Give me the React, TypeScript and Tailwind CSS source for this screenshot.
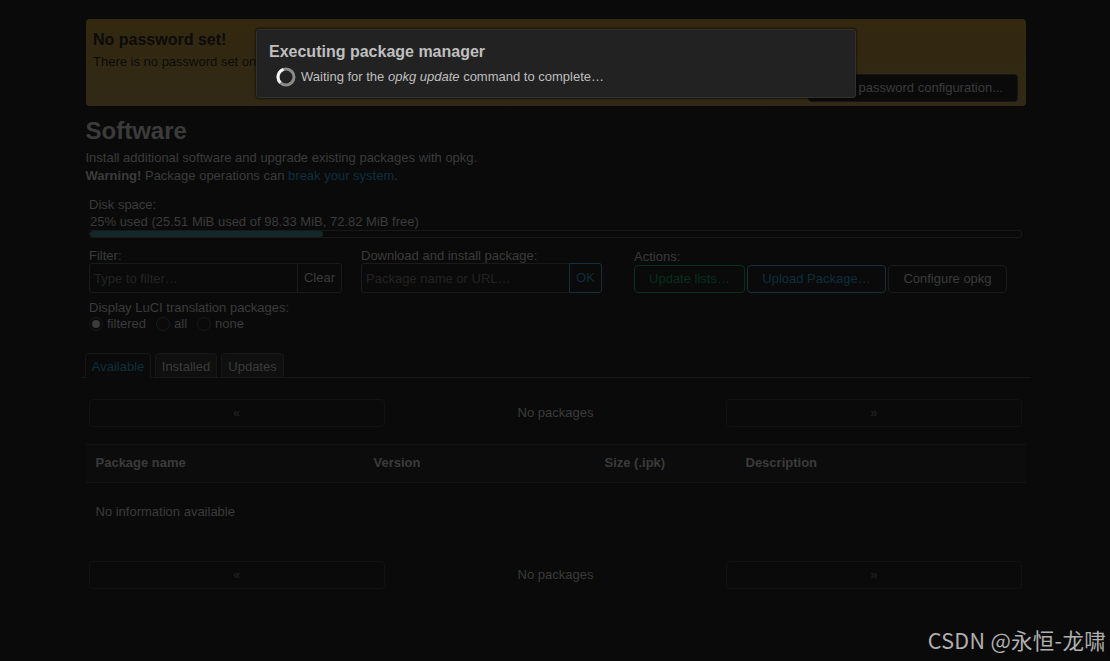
import clsx from "clsx";

interface PagerProps {
  className?: string;
}

const tabs = [
  { id: "available", label: "Available", width: "w-[66px]", active: true },
  { id: "installed", label: "Installed", width: "w-[62px]", active: false },
  { id: "updates", label: "Updates", width: "w-[63px]", active: false },
];

const languageFilters = [
  { id: "filtered", label: "filtered", checked: true },
  { id: "all", label: "all", checked: false },
  { id: "none", label: "none", checked: false },
];

function Pager({ className }: PagerProps) {
  return (
    <div className={clsx("mr-1 ml-[3px] flex h-7 items-center justify-between", className)}>
      <button className="h-7 w-[296px] rounded border border-[#121212] pr-px font-bold text-[#1e1e1e]">«</button>
      <div className="text-center">No packages</div>
      <button className="h-7 w-[296px] rounded border border-[#121212] font-bold text-[#1e1e1e]">»</button>
    </div>
  );
}

function Spinner() {
  return (
    <svg className="size-5 shrink-0" viewBox="0 0 20 20" fill="none">
      <circle cx="10" cy="10" r="8" stroke="#8b8b8b" strokeWidth="3" />
      <path d="M7.6 2.4A8 8 0 0 0 4.4 15.7" stroke="#f4f4f4" strokeWidth="3" />
    </svg>
  );
}

function ProgressModal() {
  return (
    <div className="absolute top-[29px] left-64 h-[69px] w-[600px] rounded-[3px] border border-[#303030] bg-[#222] px-3 pt-[11px] text-[#bfbfbf] shadow-[0_0_3px_#000]">
      <h4 className="text-base leading-[22px] font-bold">Executing package manager</h4>
      <p className="ml-[7px] flex items-center gap-[5px] pt-1 leading-[18px]">
        <Spinner />
        <span>
          Waiting for the <em>opkg update</em> command to complete…
        </span>
      </p>
    </div>
  );
}

export default function App() {
  return (
    <div className="relative h-[661px] w-[1110px] overflow-hidden bg-[#0a0a0a] pt-[19px] pl-[86px] font-['Liberation_Sans',Arial,sans-serif] text-[13px] leading-[18px] text-[#3b3b3b]">
      <div className="w-[940px]">
        {/* Password warning */}
        <div className="flex h-[87px] flex-col rounded bg-linear-to-b from-[#33280f] to-[#312916] px-2 pt-[9px] pb-1 pl-[7px] text-[#0b0b0b]">
          <h4 className="text-base leading-6 font-bold">No password set!</h4>
          <p className="leading-[19px]">There is no password set on this router.</p>
          <button className="mt-auto h-7 w-[210px] self-end rounded border border-[#151515] bg-[#0a0a0a] text-[#3b3b3b] whitespace-nowrap">
            Go to password configuration...
          </button>
        </div>

        <h2 className="mt-[7px] -ml-[0.5px] text-2xl leading-9 font-bold">Software</h2>
        <div className="-ml-[0.5px]">
          <p>Install additional software and upgrade existing packages with opkg.</p>
          <p>
            <strong>Warning!</strong> Package operations can{" "}
            <a className="text-[#0d2e3d]">break your system</a>.
          </p>
        </div>

        {/* Disk space */}
        <div className="mt-[11px] mr-1 ml-[3px]">
          <div className="h-[17px]">Disk space:</div>
          <div className="h-[17px] pl-px leading-[17px]">25% used (25.51 MiB used of 98.33 MiB, 72.82 MiB free)</div>
          <div className="h-2 overflow-hidden rounded-[3px] border border-[#181818]">
            <div className="h-full w-1/4 rounded-[3px] bg-[#14282c]" />
          </div>
        </div>

        {/* Controls */}
        <div className="mx-[3px] mt-2 flex h-12">
          <div className="w-[272px]">
            <div className="h-[17px] pt-px">Filter:</div>
            <div className="flex h-[30px] w-[253px] rounded-[3px] border border-[#1a1a1a]">
              <input
                className="min-w-0 flex-1 px-1 pt-0.5 placeholder:text-[#232323]"
                placeholder="Type to filter…"
              />
              <button className="w-11 border-l border-[#1a1a1a] pb-px">Clear</button>
            </div>
          </div>
          <div className="w-[273px]">
            <div className="h-[17px] pt-px">Download and install package:</div>
            <div className="flex h-[30px] w-[241px]">
              <input
                className="min-w-0 flex-1 rounded-l-[3px] border border-r-0 border-[#1a1a1a] px-1 pt-0.5 placeholder:text-[#232323]"
                placeholder="Package name or URL…"
              />
              <button className="w-[33px] rounded-r-[3px] border border-[#162f38] pb-px text-[#0d2e3d]">OK</button>
            </div>
          </div>
          <div>
            <div className="h-[19px] pt-0.5">Actions:</div>
            <div className="flex gap-0.5">
              <button className="h-7 w-[111px] rounded border border-[#04301e] text-[#04301e]">Update lists…</button>
              <button className="h-7 w-[139px] rounded border border-[#162f38] text-[#0d2e3d]">Upload Package…</button>
              <button className="h-7 w-[119px] rounded border border-[#1a1a1a]">Configure opkg</button>
            </div>
          </div>
        </div>

        <div className="mx-[3px] mt-[5px]">
          <div className="h-[17px]">Display LuCI translation packages:</div>
          <div className="flex h-4 gap-2.5">
            {languageFilters.map((filter) => (
              <label key={filter.id} className="flex items-center gap-1">
                <span className="flex size-3.5 items-center justify-center rounded-full border border-[#191919]">
                  {filter.checked && <span className="size-2 rounded-full bg-[#3b3b3b]" />}
                </span>
                {filter.label}
              </label>
            ))}
          </div>
        </div>

        {/* Tabs */}
        <div className="-mx-[5px] mt-[21px] flex h-[25px] gap-1 border-b border-[#171717] pl-1">
          {tabs.map((tab) => (
            <div
              key={tab.id}
              className={clsx(
                "rounded-t border border-b-0 border-[#171717] pt-1 text-center",
                tab.width,
                tab.active ? "h-[25px] bg-[#0a0a0a] text-[#0d2e3d]" : "h-6 bg-[#0f0f0f]"
              )}
            >
              {tab.label}
            </div>
          ))}
        </div>

        <Pager className="mt-[21px]" />

        <div className="mt-[17px]">
          <div className="flex h-[39px] items-center border-y border-[#141414] bg-[#0c0c0c] pb-px pl-[9.5px] font-bold">
            <div className="w-[278px]">Package name</div>
            <div className="w-[231px]">Version</div>
            <div className="w-[141px]">Size (.ipk)</div>
            <div>Description</div>
          </div>
          <div className="flex h-[78px] pt-5 pl-[9.5px]">No information available</div>
        </div>

        <Pager />
      </div>

      <ProgressModal />

      {/* Watermark */}
      <div className="absolute right-1 bottom-[5px] font-['Noto_Sans_CJK_SC',sans-serif] text-[21.5px] leading-8 tracking-[0.3px] whitespace-nowrap text-[#b0b0b0]">
        CSDN @永恒-龙啸
      </div>
    </div>
  );
}
